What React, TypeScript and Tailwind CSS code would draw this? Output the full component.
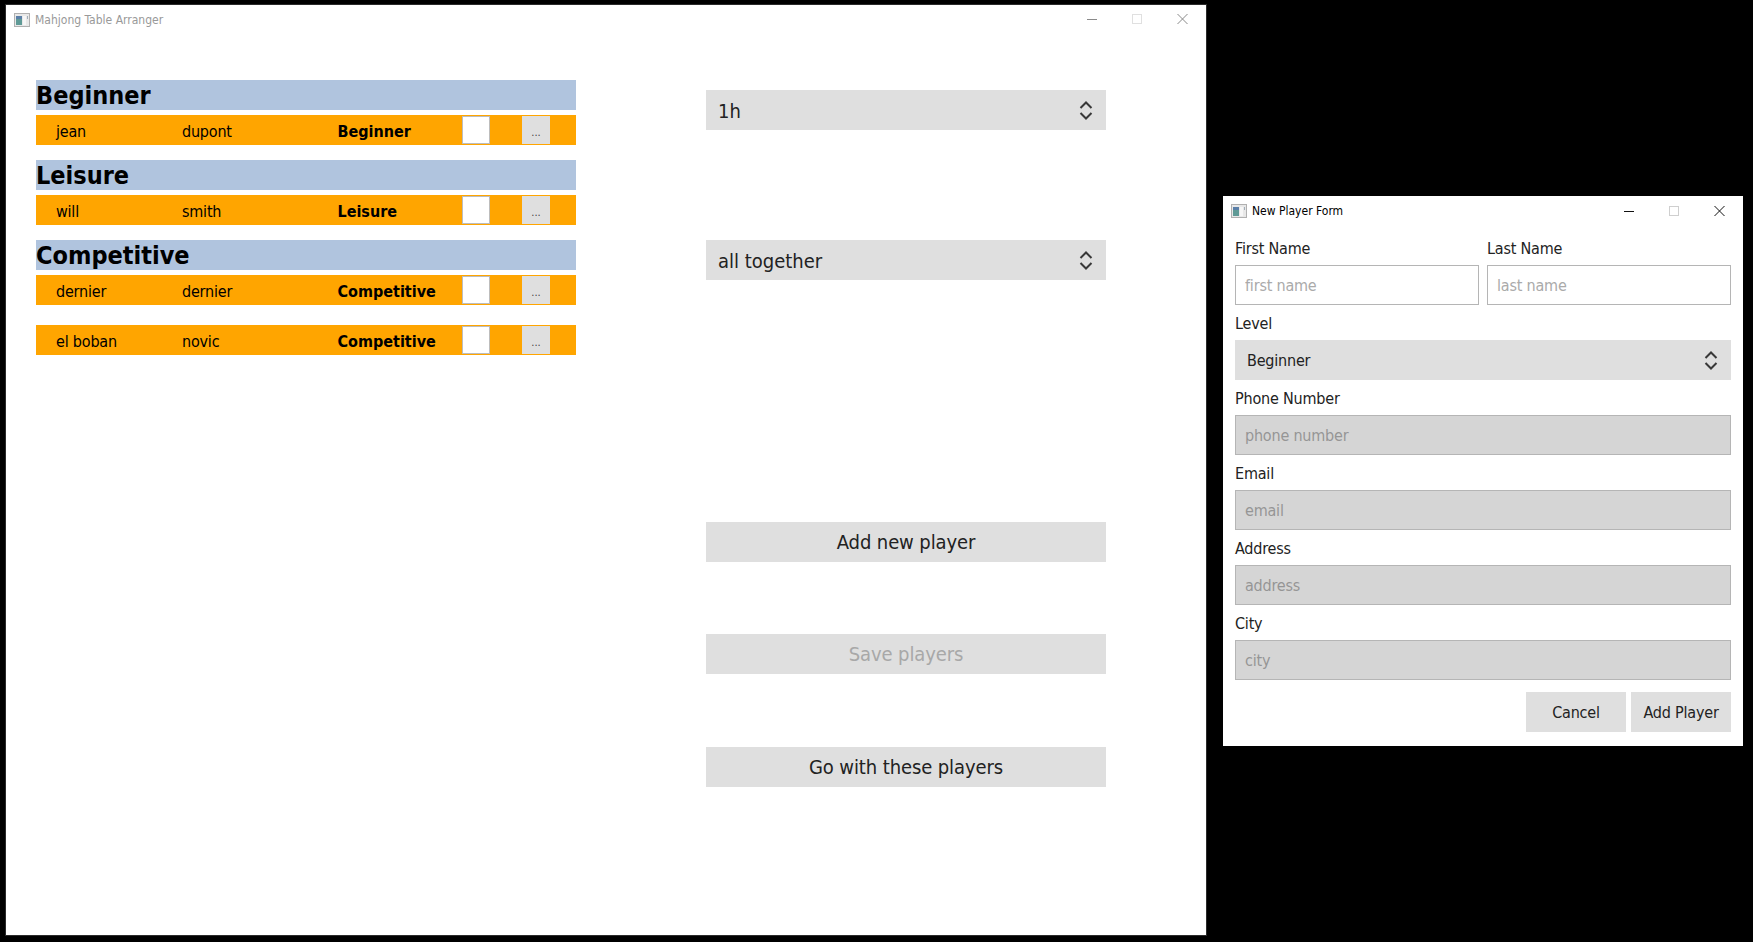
import React from "react";

const AppIcon = () => (
  <svg width="16" height="14" viewBox="0 0 16 14" className="shrink-0">
    <rect x="0.5" y="0.5" width="15" height="13" fill="#e8e8e8" stroke="#b0b0b0" />
    <rect x="2" y="3" width="6" height="9" fill="#5f9a96" />
    <rect x="2" y="3" width="6" height="3" fill="#5a7fa8" />
    <rect x="9" y="3" width="3" height="9" fill="#f6f6f6" />
    <rect x="13" y="3" width="1" height="3" fill="#a0adb8" />
  </svg>
);

const WinControls = ({ color, maxColor }: { color: string; maxColor: string }) => (
  <div className="flex items-center">
    <svg width="45" height="12" viewBox="0 0 45 12">
      <path d="M17 6.5H27" stroke={color} />
    </svg>
    <svg width="45" height="12" viewBox="0 0 45 12">
      <rect x="17.5" y="1.5" width="9" height="9" fill="none" stroke={maxColor} />
    </svg>
    <svg width="46" height="12" viewBox="0 0 46 12">
      <path d="M17.5 1L27.5 11M27.5 1L17.5 11" stroke={color} fill="none" />
    </svg>
  </div>
);

const Chevrons = () => (
  <svg width="14" height="21" viewBox="0 0 14 21" fill="none" stroke="#383838" strokeWidth="2">
    <path d="M1.5 8L7 2.5L12.5 8" />
    <path d="M1.5 13L7 18.5L12.5 13" />
  </svg>
);

const Combo = ({ text, size }: { text: string; size: string }) => (
  <div className={`flex h-10 items-center justify-between bg-[#dfdfdf] pl-3 pr-[13px] text-[#222] ${size}`}>
    <span className="pt-[2px]">{text}</span>
    <Chevrons />
  </div>
);

const Player = ({ first, last, level, className }: { first: string; last: string; level: string; className: string }) => (
  <div className={`flex h-[30px] items-center bg-[#ffa500] text-[16px] text-black ${className}`}>
    <span className="ml-5 w-[126px] pt-[3px] tracking-[-0.2px]">{first}</span>
    <span className="w-[155.5px] pt-[3px] tracking-[-0.2px]">{last}</span>
    <span className="w-[124.5px] pt-[3px] font-bold">{level}</span>
    <span className="h-7 w-7 border border-[#bdbdbd] bg-white" />
    <span className="ml-8 flex h-7 w-7 items-end justify-center bg-[#dfdfdf] pb-[6px] text-[11px] leading-none text-[#444]">...</span>
  </div>
);

const Group = ({ title, className = "" }: { title: string; className?: string }) => (
  <div className={`flex h-[30px] items-center bg-[#b0c4de] pt-[2px] text-[25px] font-bold text-black ${className}`}>{title}</div>
);

const Action = ({ text, className = "text-[#222]" }: { text: string; className?: string }) => (
  <button className={`flex h-10 w-full items-center justify-center bg-[#dfdfdf] text-[20px] tracking-[-0.1px] ${className}`}>{text}</button>
);

const Label = ({ text }: { text: string }) => (
  <div className="flex h-[35px] items-center pt-[2px] text-[16px] tracking-[-0.2px] text-[#222]">{text}</div>
);

const Field = ({ label, placeholder }: { label: string; placeholder: string }) => (
  <div>
    <Label text={label} />
    <input
      disabled
      placeholder={placeholder}
      className="h-10 w-full border border-[#b5b5b5] bg-[#d5d5d5] pl-[9px] text-[16px] tracking-[-0.2px] placeholder:text-[#959595]"
    />
  </div>
);

const TextBox = ({ label, placeholder }: { label: string; placeholder: string }) => (
  <div className="flex-1">
    <Label text={label} />
    <input
      placeholder={placeholder}
      className="h-10 w-full border border-[#b5b5b5] bg-white pl-[9px] text-[16px] tracking-[-0.2px] placeholder:text-[#aaaaaa]"
    />
  </div>
);

export default function App() {
  return (
    <div className="relative h-[942px] w-[1753px] overflow-hidden bg-black font-['DejaVu_Sans_Condensed','DejaVu_Sans',sans-serif]">
      <div className="absolute left-[5px] top-[4px] box-border h-[932px] w-[1202px] border border-[#2b2b2b] bg-white">
        <div className="flex h-[29px] items-center pl-2">
          <AppIcon />
          <span className="ml-[5px] text-[12px] text-[#999]">Mahjong Table Arranger</span>
          <div className="ml-auto pb-[2px]">
            <WinControls color="#8a8a8a" maxColor="#e0e0e0" />
          </div>
        </div>
        <div className="flex pl-[30px] pt-[46px]">
          <div className="w-[540px]">
            <Group title="Beginner" />
            <Player first="jean" last="dupont" level="Beginner" className="mt-[5px]" />
            <Group title="Leisure" className="mt-[15px]" />
            <Player first="will" last="smith" level="Leisure" className="mt-[5px]" />
            <Group title="Competitive" className="mt-[15px]" />
            <Player first="dernier" last="dernier" level="Competitive" className="mt-[5px]" />
            <Player first="el boban" last="novic" level="Competitive" className="mt-5" />
          </div>
          <div className="ml-[130px] w-[400px] pt-[10px]">
            <Combo text="1h" size="text-[20px]" />
            <div className="mt-[110px]">
              <Combo text="all together" size="text-[20px]" />
            </div>
            <div className="mt-[242px]">
              <Action text="Add new player" />
            </div>
            <div className="mt-[72px]">
              <Action text="Save players" className="text-[#a8a8a8]" />
            </div>
            <div className="mt-[73px]">
              <Action text="Go with these players" />
            </div>
          </div>
        </div>
      </div>

      <div className="absolute left-[1223px] top-[196px] h-[550px] w-[520px] bg-white">
        <div className="flex h-[30px] items-center pl-2">
          <AppIcon />
          <span className="ml-[5px] text-[12px] text-black">New Player Form</span>
          <div className="ml-auto">
            <WinControls color="#111" maxColor="#cfcfcf" />
          </div>
        </div>
        <div className="px-3 pt-1">
          <div className="flex gap-2">
            <TextBox label="First Name" placeholder="first name" />
            <TextBox label="Last Name" placeholder="last name" />
          </div>
          <Label text="Level" />
          <Combo text="Beginner" size="text-[16px] tracking-[-0.2px]" />
          <Field label="Phone Number" placeholder="phone number" />
          <Field label="Email" placeholder="email" />
          <Field label="Address" placeholder="address" />
          <Field label="City" placeholder="city" />
          <div className="mt-3 flex justify-end gap-[5px]">
            <button className="h-10 w-[100px] bg-[#dfdfdf] pt-[2px] text-[16px] tracking-[-0.2px] text-[#222]">Cancel</button>
            <button className="h-10 w-[100px] bg-[#dfdfdf] pt-[2px] text-[16px] tracking-[-0.2px] text-[#222]">Add Player</button>
          </div>
        </div>
      </div>
    </div>
  );
}
